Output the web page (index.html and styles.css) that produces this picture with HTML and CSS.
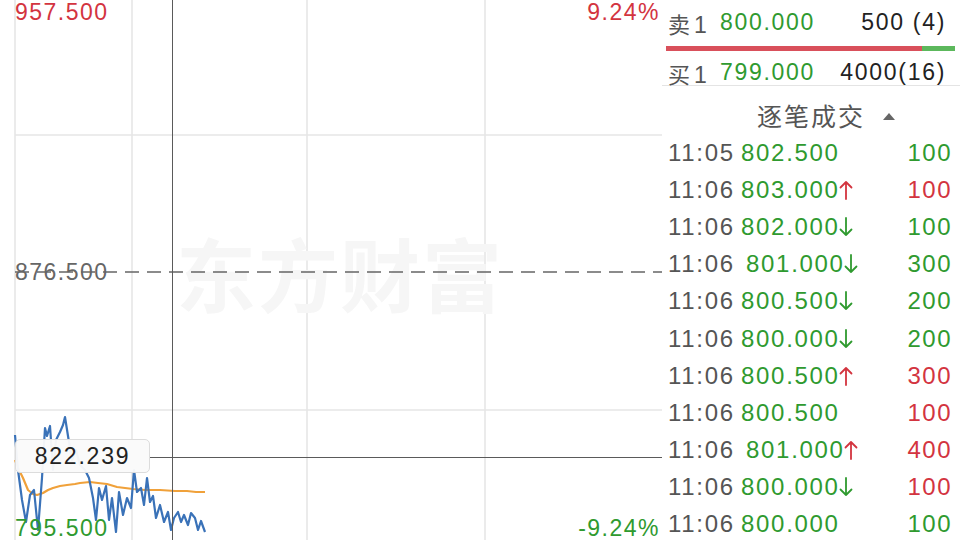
FILE: index.html
```html
<!DOCTYPE html>
<html lang="zh-CN">
<head>
<meta charset="utf-8">
<title>分时 · 逐笔成交</title>
<link rel="stylesheet" href="styles.css">
</head>
<body>
<div class="screen">
  <section class="chart">
    <svg class="plot" width="662" height="540" viewBox="0 0 662 540">
      <!-- grid -->
      <g class="grid">
        <line x1="15" y1="0" x2="15" y2="540"/>
        <line x1="132" y1="0" x2="132" y2="540"/>
        <line x1="307" y1="0" x2="307" y2="540"/>
        <line x1="485" y1="0" x2="485" y2="540"/>
        <line x1="15" y1="135" x2="662" y2="135"/>
        <line x1="15" y1="410" x2="662" y2="410"/>
      </g>
      <!-- watermark -->
      <text class="watermark" x="340" y="306" text-anchor="middle">东方财富</text>
      <!-- previous close -->
      <line class="baseline" x1="15" y1="272" x2="662" y2="272"/>
      <!-- average price -->
      <polyline class="avg" points="15,460 19,470 23,478 28,490 33,494 37,495 43,493 48,490 53,488 60,486 67,485 75,484 80,483 90,482 98,483 107,484 117,487 125,488 133,489 145,490 160,490 175,491 187,491 196,492 205,492"/>
      <!-- price -->
      <polyline class="price" points="15,435 18,470 22,500 26,522 30,495 34,490 38,530 42,478 45,428 47,436 50,426 53,470 56,440 60,432 63,425 65,417 68,436 72,460 76,450 80,465 85,470 89,478 93,498 96,520 99,488 102,500 106,486 109,520 112,498 116,532 119,492 123,515 127,498 131,508 134,470 137,492 141,488 144,505 147,478 150,502 153,496 156,518 160,505 164,522 168,512 171,530 174,518 178,512 181,522 184,515 188,525 191,513 195,518 198,530 201,521 205,532"/>
      <!-- crosshair -->
      <line class="cross" x1="172.5" y1="0" x2="172.5" y2="540"/>
      <line class="cross" x1="150" y1="457.5" x2="662" y2="457.5"/>
    </svg>
    <span class="axis up top-left">957.500</span>
    <span class="axis up top-right">9.24%</span>
    <span class="axis mid">876.500</span>
    <span class="axis down bottom-left">795.500</span>
    <span class="axis down bottom-right">-9.24%</span>
    <span class="cursor-tag">822.239</span>
  </section>

  <aside class="side">
    <div class="quote quote-sell">
      <span class="q-label">卖<b>1</b></span>
      <span class="q-price down">800.000</span>
      <span class="q-vol">500 (4)</span>
    </div>
    <div class="ratio"><span class="ratio-sell"></span><span class="ratio-buy"></span></div>
    <div class="quote quote-buy">
      <span class="q-label">买<b>1</b></span>
      <span class="q-price down">799.000</span>
      <span class="q-vol">4000(16)</span>
    </div>

    <div class="ticks">
      <div class="ticks-head">逐笔成交<span class="caret"></span></div>
      <div class="tick"><span class="t-time">11:05</span><span class="t-price down">802.500</span><span class="t-vol down">100</span></div>
      <div class="tick"><span class="t-time">11:06</span><span class="t-price down">803.000<svg class="arrow up" viewBox="0 0 14 20"><path d="M7 2V19M1.5 7.5L7 2l5.5 5.5"/></svg></span><span class="t-vol up">100</span></div>
      <div class="tick"><span class="t-time">11:06</span><span class="t-price down">802.000<svg class="arrow down" viewBox="0 0 14 20"><path d="M7 1V18M1.5 12.5L7 18l5.5-5.5"/></svg></span><span class="t-vol down">100</span></div>
      <div class="tick"><span class="t-time">11:06</span><span class="t-price down shift">801.000<svg class="arrow down" viewBox="0 0 14 20"><path d="M7 1V18M1.5 12.5L7 18l5.5-5.5"/></svg></span><span class="t-vol down">300</span></div>
      <div class="tick"><span class="t-time">11:06</span><span class="t-price down">800.500<svg class="arrow down" viewBox="0 0 14 20"><path d="M7 1V18M1.5 12.5L7 18l5.5-5.5"/></svg></span><span class="t-vol down">200</span></div>
      <div class="tick"><span class="t-time">11:06</span><span class="t-price down">800.000<svg class="arrow down" viewBox="0 0 14 20"><path d="M7 1V18M1.5 12.5L7 18l5.5-5.5"/></svg></span><span class="t-vol down">200</span></div>
      <div class="tick"><span class="t-time">11:06</span><span class="t-price down">800.500<svg class="arrow up" viewBox="0 0 14 20"><path d="M7 2V19M1.5 7.5L7 2l5.5 5.5"/></svg></span><span class="t-vol up">300</span></div>
      <div class="tick"><span class="t-time">11:06</span><span class="t-price down">800.500</span><span class="t-vol up">100</span></div>
      <div class="tick"><span class="t-time">11:06</span><span class="t-price down shift">801.000<svg class="arrow up" viewBox="0 0 14 20"><path d="M7 2V19M1.5 7.5L7 2l5.5 5.5"/></svg></span><span class="t-vol up">400</span></div>
      <div class="tick"><span class="t-time">11:06</span><span class="t-price down">800.000<svg class="arrow down" viewBox="0 0 14 20"><path d="M7 1V18M1.5 12.5L7 18l5.5-5.5"/></svg></span><span class="t-vol up">100</span></div>
      <div class="tick"><span class="t-time">11:06</span><span class="t-price down">800.000</span><span class="t-vol down">100</span></div>
    </div>
  </aside>
</div>
</body>
</html>
```

FILE: styles.css
```css
html, body {
  margin: 0;
  padding: 0;
  background: #ffffff;
}

body {
  font-family: "Liberation Sans", "Noto Sans CJK SC", sans-serif;
  color: #222;
}

.screen {
  width: 960px;
  height: 540px;
  overflow: hidden;
  display: flex;
}

.up { color: #d3343f; }
.down { color: #2f9a2f; }

/* ---------- intraday chart ---------- */
.chart {
  position: relative;
  width: 662px;
  height: 540px;
  flex: none;
}

.plot {
  display: block;
}

.grid line {
  stroke: #e6e6e6;
  stroke-width: 1.6;
}

.watermark {
  font-family: "Noto Sans CJK SC", sans-serif;
  font-weight: 700;
  font-size: 80px;
  letter-spacing: 2px;
  fill: #f6f6f6;
}

.baseline {
  stroke: #666;
  stroke-width: 1.6;
  stroke-dasharray: 14 8;
}

.avg {
  fill: none;
  stroke: #f0a13a;
  stroke-width: 2.2;
  stroke-linejoin: round;
}

.price {
  fill: none;
  stroke: #3a72b8;
  stroke-width: 2.2;
  stroke-linejoin: round;
}

.cross {
  stroke: #5a5a5a;
  stroke-width: 1;
}

.axis {
  position: absolute;
  font-size: 23px;
  line-height: 24px;
  letter-spacing: 1.5px;
}

.top-left { left: 15px; top: 0; }
.top-right { right: 2px; top: 0; }
.mid { left: 15px; top: 260px; color: #666; }
.bottom-left { left: 15px; bottom: 0; }
.bottom-right { right: 2px; bottom: 0; }

.cursor-tag {
  position: absolute;
  left: 15px;
  top: 439px;
  width: 135px;
  height: 34px;
  box-sizing: border-box;
  border: 1px solid #dcdcdc;
  border-radius: 5px;
  background: rgba(250, 250, 250, 0.96);
  font-size: 23px;
  line-height: 32px;
  letter-spacing: 1.8px;
  text-align: center;
  color: #222;
}

/* ---------- order book & trades ---------- */
.side {
  width: 298px;
  height: 540px;
  flex: none;
  display: flex;
  flex-direction: column;
  overflow: hidden;
}

.quote {
  display: flex;
  flex: none;
  align-items: center;
  box-sizing: border-box;
  padding: 0 14px 0 6px;
  font-size: 23px;
  letter-spacing: 1.7px;
}

.quote-sell {
  height: 44px;
  padding-top: 1px;
}

.quote-buy {
  height: 30px;
  margin-top: 5px;
  padding-top: 4px;
  border-bottom: 1px solid #e4e4e4;
}

.q-label {
  width: 52px;
  color: #555;
  font-family: "Noto Sans CJK SC", sans-serif;
  font-size: 22px;
  letter-spacing: 0;
}

.q-label b {
  font-family: "Liberation Sans", sans-serif;
  font-weight: 400;
  font-size: 23px;
  margin-left: 4px;
}

.q-price {
  flex: none;
}

.q-vol {
  flex: 1;
  text-align: right;
  color: #222;
}

.ratio {
  display: flex;
  flex: none;
  height: 5px;
  margin: 2px 5px 0 4px;
}

.ratio-sell {
  width: 256px;
  background: #d9505b;
}

.ratio-buy {
  flex: 1;
  background: #5cb85c;
}

.ticks {
  flex: 1;
  min-height: 0;
  border-left: 1px solid #e4e4e4;
  margin-left: -1px;
}

.ticks-head {
  height: 37px;
  padding: 11px 0 0 30px;
  line-height: 37px;
  text-align: center;
  font-family: "Noto Sans CJK SC", sans-serif;
  font-size: 25px;
  color: #555;
  letter-spacing: 2px;
}

.caret {
  display: inline-block;
  width: 0;
  height: 0;
  margin-left: 18px;
  vertical-align: 6px;
  border-left: 6px solid transparent;
  border-right: 6px solid transparent;
  border-bottom: 7px solid #666;
}

.tick {
  display: flex;
  align-items: center;
  height: 37.2px;
  padding: 0 8px 0 6px;
  font-size: 24px;
  letter-spacing: 1.7px;
}

.t-time {
  width: 73px;
  flex: none;
  color: #555;
}

.t-price {
  flex: none;
  display: flex;
  align-items: center;
}

.t-price.shift {
  margin-left: 5px;
}

.arrow {
  width: 14px;
  height: 20px;
  margin-left: -1px;
  fill: none;
  stroke: currentColor;
  stroke-width: 1.8;
  stroke-linecap: round;
  stroke-linejoin: round;
}

.t-vol {
  flex: 1;
  text-align: right;
  letter-spacing: 1.5px;
}
```
